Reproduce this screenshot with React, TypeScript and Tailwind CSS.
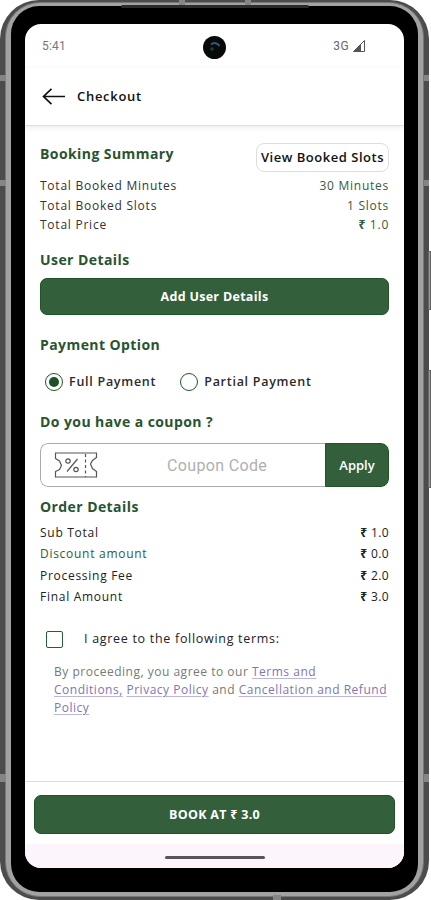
import { ReactNode, useState } from "react";

const SUMMARY = [
  { label: "Total Booked Minutes", value: "30 Minutes" },
  { label: "Total Booked Slots", value: "1 Slots" },
  { label: "Total Price", value: "₹ 1.0" },
];

const ORDER = [
  { label: "Sub Total", value: "₹ 1.0" },
  { label: "Discount amount", value: "₹ 0.0", green: true },
  { label: "Processing Fee", value: "₹ 2.0" },
  { label: "Final Amount", value: "₹ 3.0" },
];

function Heading({ children }: { children: ReactNode }) {
  return <h2 className="text-[14px] leading-5 font-bold tracking-[0.42px] text-[#285430]">{children}</h2>;
}

function Amount({ value }: { value: string }) {
  if (!value.startsWith("₹")) return <>{value}</>;
  return <><b className="font-bold">₹</b>{value.slice(1)}</>;
}

function Radio({ label, checked, onSelect }: { label: string; checked: boolean; onSelect: () => void }) {
  return (
    <button role="radio" aria-checked={checked} onClick={onSelect} className="flex items-center gap-[6px]">
      <span className="flex size-[18px] items-center justify-center rounded-full border-[1.5px] border-[#24552b]">
        {checked && <span className="size-[10px] rounded-full bg-[#1f5128]" />}
      </span>
      <span className="text-[12.5px] leading-5 font-semibold tracking-[0.73px] text-[#2b2b2b]">{label}</span>
    </button>
  );
}

function CouponIcon() {
  return (
    <svg width="44" height="28" viewBox="0 0 44 28" fill="none" stroke="#555" strokeWidth="1.2">
      <path d="M1.500 2H42.500V6.500L38.500 9.500L36.500 13L38.500 17.500L42.500 20.500V26H1.500V20.500L5.500 18.500L7.500 14.500L5.500 10L1.500 7.500Z" />
      <path d="M31.500 3V26" strokeDasharray="3 2.500" />
      <path d="M23.500 8L13 20.500" />
      <circle cx="14" cy="10" r="2.200" />
      <circle cx="22" cy="18.500" r="2.200" />
    </svg>
  );
}

function StatusBar() {
  return (
    <div className="relative flex h-[44px] shrink-0 items-center justify-between pr-[39px] pl-[17px] font-['Roboto',sans-serif] text-[12px] text-[#777]">
      <span className="tracking-[0.2px]">5:41</span>
      <span className="flex items-center gap-[4px] text-[#666]">
        <span className="tracking-[0.4px]">3G</span>
        <svg width="12" height="12" viewBox="0 0 12 12">
          <path d="M11.500 .5V11.500H.5Z" fill="none" stroke="#555" />
          <path d="M8 4V11.500H.5Z" fill="#555" />
        </svg>
      </span>
      <svg className="absolute top-[12px] left-[178px]" width="23" height="23" viewBox="0 0 23 23">
        <circle cx="11.500" cy="11.500" r="11.500" fill="#080909" />
        <path d="M8 8.500C11 6 15 7 16.500 10" fill="none" stroke="#34568a" strokeWidth="2" />
        <circle cx="9" cy="13" r="1.800" fill="#173f37" />
      </svg>
    </div>
  );
}

function Checkout() {
  const [full, setFull] = useState(true);
  const [agreed, setAgreed] = useState(false);
  return (
    <div className="flex h-full flex-col bg-white">
      <StatusBar />
      <header className="flex h-[58px] shrink-0 items-center gap-[12px] border-b border-[#dedede] pl-[17px] shadow-[0_2px_6px_rgba(0,0,0,0.07)]">
        <svg width="23" height="18" viewBox="0 0 23 18" fill="none" stroke="#111" strokeWidth="1.7">
          <path d="M9.500 .8L1.500 8.500L9.500 16.200M1.500 8.500H23" />
        </svg>
        <h1 className="text-[13px] font-semibold tracking-[0.7px] text-[#111]">Checkout</h1>
      </header>

      <main className="flex-1 px-[15px]">
        <div className="mt-[17px] flex h-[29px] justify-between">
          <div className="pt-px"><Heading>Booking Summary</Heading></div>
          <button className="h-[29px] w-[133px] rounded-[8px] border border-[#dedede] pt-px text-[13px] font-semibold tracking-[0.52px] whitespace-nowrap text-[#111]">View Booked Slots</button>
        </div>
        <div className="mt-[4px]">
          {SUMMARY.map((r) => (
            <div key={r.label} className="flex h-[19.7px] items-center justify-between text-[12px]">
              <span className="tracking-[0.76px] text-[#333]">{r.label}</span>
              <span className="tracking-[0.75px] text-[#375a3e]"><Amount value={r.value} /></span>
            </div>
          ))}
        </div>

        <div className="mt-[15px]"><Heading>User Details</Heading></div>
        <button className="mt-[8px] h-[37px] w-full rounded-[7px] border border-[#205328] bg-[#335f3b] pt-px text-[12.5px] font-bold tracking-[0.3px] text-white">Add User Details</button>

        <div className="mt-[20px]"><Heading>Payment Option</Heading></div>
        <div className="mt-[17px] flex gap-[24px] pl-[5px]">
          <Radio label="Full Payment" checked={full} onSelect={() => setFull(true)} />
          <Radio label="Partial Payment" checked={!full} onSelect={() => setFull(false)} />
        </div>

        <div className="mt-[20px]"><Heading>Do you have a coupon ?</Heading></div>
        <div className="mt-[11px] flex h-[44px] overflow-hidden rounded-[8px]">
          <div className="flex flex-1 items-center rounded-l-[8px] border border-r-0 border-[#aaa] pl-[13px]">
            <CouponIcon />
            <input placeholder="Coupon Code" className="mt-[2px] ml-[69px] w-[150px] font-['Roboto',sans-serif] text-[16px] tracking-[0.35px] outline-none placeholder:text-[#b0b0b0]" />
          </div>
          <button className="w-[64px] rounded-r-[8px] border border-[#205328] bg-[#335f3b] pt-px text-[13px] font-semibold text-white">Apply</button>
        </div>

        <div className="mt-[10px]"><Heading>Order Details</Heading></div>
        <div className="mt-[5px]">
          {ORDER.map((r) => (
            <div key={r.label} className="flex h-[21.5px] items-center justify-between text-[12px]">
              <span className={`tracking-[0.72px] ${r.green ? "text-[#2f5c38]" : "text-[#222]"}`}>{r.label}</span>
              <span className="tracking-[0.4px] text-[#222]"><Amount value={r.value} /></span>
            </div>
          ))}
        </div>

        <label className="mt-[21px] flex items-center gap-[21px] pl-[6px]">
          <input type="checkbox" checked={agreed} onChange={(e) => setAgreed(e.target.checked)}
            className="size-[17px] appearance-none rounded-[2px] border-[1.5px] border-[#2b5b32] checked:bg-[#335f3b]" />
          <span className="text-[12.5px] leading-5 tracking-[0.7px] text-[#222]">I agree to the following terms:</span>
        </label>
        <p className="mt-[14px] pl-[14px] text-[12px] leading-[18px] tracking-[0.51px] whitespace-nowrap text-[#747b75]">
          By proceeding, you agree to our <Link>Terms and</Link><br />
          <Link>Conditions,</Link> <Link>Privacy Policy</Link> and <Link>Cancellation and Refund</Link><br />
          <Link>Policy</Link>
        </p>
      </main>

      <footer className="h-[87px] shrink-0 border-t border-[#ddd] px-[9px] pt-[13px]">
        <button className="h-[39px] w-full rounded-[7px] border border-[#205328] bg-[#335f3b] pt-px text-[12.5px] font-bold tracking-[0.3px] text-white">BOOK AT ₹ 3.0</button>
        <div className="-mx-[9px] mt-[10px] flex h-[24px] justify-center bg-[#fcf6fc] pt-[12px]">
          <div className="h-[3px] w-[100px] rounded-full bg-[#5c525c]" />
        </div>
      </footer>
    </div>
  );
}

function Link({ children }: { children: ReactNode }) {
  return <a href="#" className="text-[#8176b3] underline decoration-[#bcb5dc] underline-offset-2">{children}</a>;
}

// side keys and antenna lines sit over the edge of the case
const CASE_MARKS = [
  "top-[251px] left-[428px] h-[59px] w-[3px] border border-[#666] bg-[#999]",
  "top-[370px] left-[428px] h-[118px] w-[3px] border border-[#666] bg-[#999]",
  "top-[75px] left-0 h-[6px] w-[6px] bg-[#858585]",
  "top-[180px] left-0 h-[6px] w-[6px] bg-[#858585]",
  "top-[774px] left-0 h-[8px] w-[6px] bg-[#858585]",
  "top-[75px] left-[424px] h-[6px] w-[5px] bg-[#858585]",
  "top-[180px] left-[424px] h-[6px] w-[5px] bg-[#858585]",
  "top-[774px] left-[424px] h-[8px] w-[5px] bg-[#858585]",
  "top-0 left-[179px] h-[5px] w-[6px] bg-[#858585]",
  "top-0 left-[245px] h-[5px] w-[6px] bg-[#858585]",
  "top-[895px] left-[273px] h-[5px] w-[8px] bg-[#858585]",
  "top-[5px] left-[121px] h-[3px] w-[188px] rounded-full bg-[#292d29]",
];

export default function App() {
  return (
    <div className="relative h-[900px] w-[431px] overflow-hidden bg-white font-['Open_Sans','Noto_Sans',sans-serif]">
      <div className="h-[900px] w-[429px] rounded-[39px] bg-[#4c4c4c] px-[5px] pt-[2px] pb-[3px]">
        <div className="h-full rounded-[35px] border border-[#777] bg-[#a2a2a2] px-[5px] pt-[3px] pb-[4px]">
          <div className="h-full rounded-[28px] bg-black px-[14px] pt-[18px] pb-[21px]">
            <div className="h-[844px] w-[379px] overflow-hidden rounded-[16px]">
              <Checkout />
            </div>
          </div>
        </div>
      </div>
      {CASE_MARKS.map((m) => <div key={m} className={`absolute ${m}`} />)}
    </div>
  );
}
